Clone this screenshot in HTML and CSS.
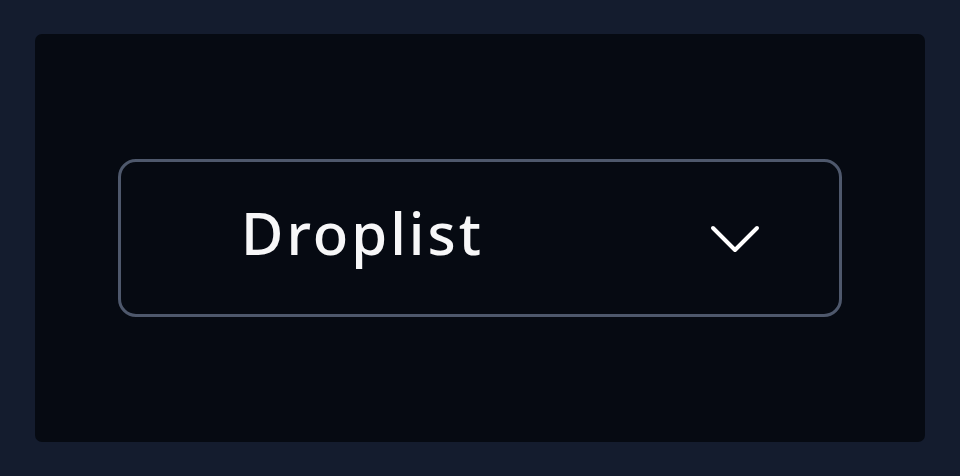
FILE: index.html
```html
<!DOCTYPE html>
<html>
<head>
<meta charset="utf-8">
<link rel="stylesheet" href="styles.css">
</head>
<body>
<div class="panel">
  <div class="droplist">
    <span class="label">Droplist</span>
    <svg class="chevron" width="50" height="30" viewBox="0 0 50 30" fill="none">
      <path d="M3 3 L25 25 L47 3" stroke="#ffffff" stroke-width="4" stroke-linecap="round" stroke-linejoin="round"/>
    </svg>
  </div>
</div>
</body>
</html>
```
FILE: styles.css
```css
html, body {
  margin: 0;
  padding: 0;
}
body {
  width: 960px;
  height: 476px;
  background: #141c2e;
  padding: 34px 35px;
  box-sizing: border-box;
}
.panel {
  height: 408px;
  background: #060a12;
  border-radius: 7px;
  display: flex;
  align-items: center;
  justify-content: center;
}
.droplist {
  width: 724px;
  height: 158px;
  box-sizing: border-box;
  border: 3px solid #4e586c;
  border-radius: 18px;
  display: flex;
  align-items: center;
  justify-content: space-between;
  padding: 0 79px 0 120px;
}
.label {
  font-family: "Noto Sans", "DejaVu Sans", sans-serif;
  font-weight: 500;
  font-size: 58px;
  color: #f7f7f8;
  letter-spacing: 3px;
  line-height: 1;
  margin-top: -10px;
}
.chevron {
  display: block;
  margin-top: 4px;
}
```
